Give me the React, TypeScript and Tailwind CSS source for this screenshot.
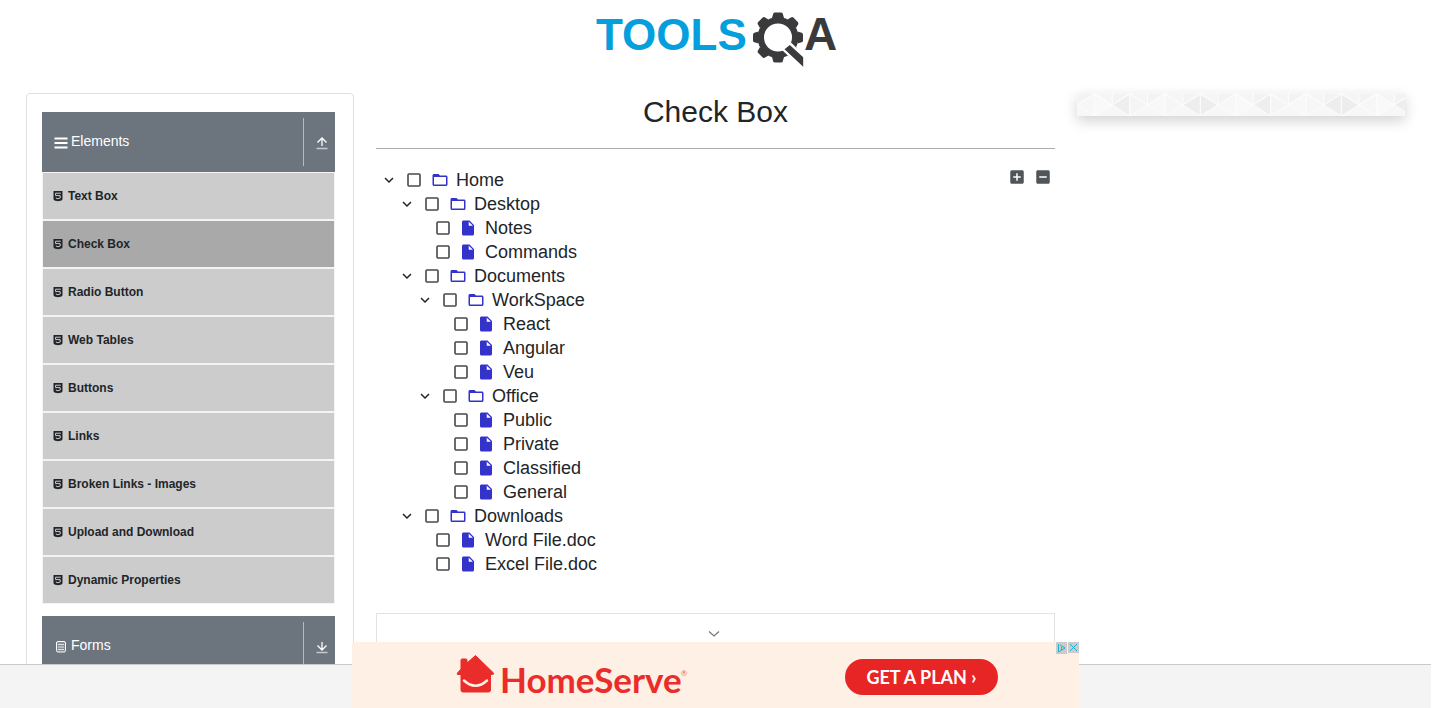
import { useState } from "react";
import type { ReactNode } from "react";
import { MdAddBox, MdExpandMore, MdFolderOpen, MdIndeterminateCheckBox, MdInsertDriveFile } from "react-icons/md";

type TreeNode = { label: string; children?: TreeNode[] };

const tree: TreeNode = {
  label: "Home",
  children: [
    { label: "Desktop", children: [{ label: "Notes" }, { label: "Commands" }] },
    {
      label: "Documents",
      children: [
        { label: "WorkSpace", children: [{ label: "React" }, { label: "Angular" }, { label: "Veu" }] },
        {
          label: "Office",
          children: [{ label: "Public" }, { label: "Private" }, { label: "Classified" }, { label: "General" }],
        },
      ],
    },
    { label: "Downloads", children: [{ label: "Word File.doc" }, { label: "Excel File.doc" }] },
  ],
};

const menu = [
  "Text Box",
  "Check Box",
  "Radio Button",
  "Web Tables",
  "Buttons",
  "Links",
  "Broken Links - Images",
  "Upload and Download",
  "Dynamic Properties",
];

const gearAngles = [0, 45, 90, 135, 180, 225, 270, 315];

function Logo() {
  return (
    <svg width="246" height="60" viewBox="0 0 246 60" role="img" aria-label="TOOLSQA">
      <text x="3" y="42" fontSize="44" fontWeight="700" fill="#049fdc" className="font-['Liberation_Sans',sans-serif]">
        TOOLS
      </text>
      <g fill="#3a3a3c">
        {gearAngles.map((a) => (
          <path
            key={a}
            d="M179 10 L180.2 5.8 Q180.6 4.5 182 4.500 H188 Q189.400 4.500 189.800 5.800 L191 10Z"
            transform={`rotate(${a} 185 29.500)`}
          />
        ))}
        <circle cx="185" cy="29.500" r="20.500" />
      </g>
      <circle cx="185" cy="29.500" r="14" fill="#fff" />
      <path d="M189 42 L198 34.500 L214 50 V60 H208Z" fill="#fff" />
      <path d="M191.500 41.300 L196.800 37 L210.200 49.300 V58.700Z" fill="#3a3a3c" />
      <text x="211" y="42" fontSize="46" fontWeight="700" fill="#3a3a3c" className="font-['Liberation_Sans',sans-serif]">
        A
      </text>
    </svg>
  );
}

function Html5Icon() {
  return (
    <svg width="10" height="12" viewBox="0 0 10 12" aria-hidden="true">
      <path d="M0.500 1H9.500V9Q9.500 10 8.500 10.400L5 11.200L1.500 10.400Q0.500 10 0.500 9Z" fill="#212529" />
      <path d="M7.800 3.200H2.600V5.600H7.200V8L5 8.800L2.800 8" fill="none" stroke="#ccc" strokeWidth="1" />
    </svg>
  );
}

function GroupHeader({ title, icon, open }: { title: string; icon: ReactNode; open: boolean }) {
  return (
    <button type="button" aria-expanded={open} className="flex h-[60px] w-full items-center bg-[#6c757d] text-left text-white">
      <span className="flex flex-1 items-center gap-[3px] pb-[2px] pl-3 text-[14px]">
        <span className="flex w-[14px] justify-center pt-[3px]">{icon}</span>
        {title}
      </span>
      <span className="flex h-12 w-8 items-center justify-center border-l border-[#b5babe] pt-[2px] pl-1">
        <svg width="12" height="14" viewBox="0 0 12 14" fill="none" aria-hidden="true">
          <path d={open ? "M6 10V2M1.500 6.500L6 2L10.500 6.500" : "M6 2V10M1.500 5.500L6 10L10.500 5.500"} stroke="#fff" strokeWidth="1.300" />
          <path d="M0.500 12.500H11.500" stroke="#c4c8cb" strokeWidth="1.500" />
        </svg>
      </span>
    </button>
  );
}

function Sidebar() {
  return (
    <nav className="rounded border border-[#dfdfdf] pt-[18px] pr-[18px] pb-4 pl-[15px]">
      <GroupHeader
        open
        title="Elements"
        icon={
          <svg width="14" height="12" viewBox="0 0 14 12" aria-hidden="true">
            <path d="M0.500 1.500H13.500M0.500 6H13.500M0.500 10.500H13.500" stroke="#fff" strokeWidth="2" />
          </svg>
        }
      />
      <ul>
        {menu.map((name) => (
          <li key={name}>
            <a
              href="#"
              className={`flex h-12 items-center gap-[5px] border border-[#f4f4f4] pl-[10px] text-[12px] font-bold text-[#212529] ${
                name === "Check Box" ? "bg-[#a9a9a9]" : "bg-[#ccc]"
              }`}
            >
              <Html5Icon />
              {name}
            </a>
          </li>
        ))}
      </ul>
      <div className="mt-3">
        <GroupHeader
          open={false}
          title="Forms"
          icon={
            <svg width="10" height="12" viewBox="0 0 10 12" fill="none" aria-hidden="true">
              <rect x="0.500" y="0.500" width="9" height="10.500" rx="1.500" fill="#878e95" stroke="#fff" />
              <path d="M2 3.500H8M2 6H8M2 8.500H8" stroke="#dfe1e3" />
            </svg>
          }
        />
      </div>
    </nav>
  );
}

function Branch({ node, expanded }: { node: TreeNode; expanded: boolean }) {
  const [open, setOpen] = useState(true);
  const folder = node.children !== undefined;
  return (
    <li>
      <div className={`flex h-6 items-center ${folder ? "pl-1" : "pl-[22px]"}`}>
        {folder && (
          <button type="button" aria-label="Toggle" onClick={() => setOpen(!open)} className="mr-[7px]">
            <MdExpandMore size={18} color="#212529" />
          </button>
        )}
        <label className={`flex items-center ${folder ? "gap-2" : "gap-[7px]"}`}>
          <input type="checkbox" className="peer sr-only" />
          <svg
            width="18"
            height="18"
            viewBox="0 0 18 18"
            fill="none"
            stroke="#45494d"
            strokeWidth="1.600"
            className="text-transparent peer-checked:text-[#45494d]"
            aria-hidden="true"
          >
            <rect x="3" y="3" width="12" height="12" rx="1" />
            <path d="M5 9L8 12L13 6" stroke="currentColor" />
          </svg>
          <span className={`flex items-center ${folder ? "gap-[7px]" : "gap-2"}`}>
            {folder ? <MdFolderOpen size={18} color="#3333cc" /> : <MdInsertDriveFile size={18} color="#3333cc" />}
            <span className="text-[18px] leading-6">{node.label}</span>
          </span>
        </label>
      </div>
      {folder && open && expanded && (
        <ul className="pl-[18px]">
          {node.children?.map((child) => (
            <Branch key={child.label} node={child} expanded={expanded} />
          ))}
        </ul>
      )}
    </li>
  );
}

function CheckBoxPage() {
  const [expanded, setExpanded] = useState(true);
  return (
    <main>
      <h1 className="pb-[18px] text-center text-[30px] leading-[37px]">Check Box</h1>
      <hr className="border-[#adadad]" />
      <div className="flex items-start pt-[19px]">
        <ul className="flex-1">
          <Branch node={tree} expanded={expanded} />
        </ul>
        <div className="flex gap-2 pr-[3px] text-[#50555a]">
          <button type="button" aria-label="Expand all" onClick={() => setExpanded(true)}>
            <MdAddBox size={18} />
          </button>
          <button type="button" aria-label="Collapse all" onClick={() => setExpanded(false)}>
            <MdIndeterminateCheckBox size={18} />
          </button>
        </div>
      </div>
      <div className="mt-[37px] flex h-32 justify-center border border-[#e3e3e3] pt-4 pr-[3px]">
        <svg width="12" height="8" viewBox="0 0 12 8" fill="none" aria-hidden="true">
          <path d="M1 1.500L6 6L11 1.500" stroke="#777" strokeWidth="1.300" />
        </svg>
      </div>
    </main>
  );
}

const tiles: [string, string][] = [
  ["#f7f7f7", "#f9f9f9"],
  ["#eeeeee", "#f5f5f5"],
  ["#f8f8f8", "#f6f6f6"],
  ["#ededed", "#ededed"],
];

function PatternStrip() {
  return (
    <svg className="block h-[23px] w-full bg-[#f7f7f7] shadow-[0_5px_14px_rgba(0,0,0,0.18)]" aria-hidden="true">
      <defs>
        <pattern id="diamonds" width="141" height="23" patternUnits="userSpaceOnUse">
          {tiles.map(([left, right], i) => (
            <g key={i} transform={`translate(${i * 35.25} 0)`} stroke="#fcfcfc" strokeWidth="1">
              <path d="M0 0H17.600L0 12Z" fill="#f3f3f3" />
              <path d="M35.200 0H17.600L35.200 12Z" fill="#f5f5f5" />
              <path d="M0 12L17.600 1V23Z" fill={left} />
              <path d="M35.200 12L17.600 1V23Z" fill={right} />
            </g>
          ))}
        </pattern>
      </defs>
      <rect width="100%" height="23" fill="url(#diamonds)" />
    </svg>
  );
}

function AdBanner() {
  return (
    <div className="relative flex h-[66px] w-[727px] items-start bg-[#fef0e4] pl-[104px] font-[Lato,sans-serif]">
      <svg className="mt-3" width="39" height="40" viewBox="0 0 39 40" aria-hidden="true">
        <path
          d="M19.500 1.500L37.500 19Q38 20.500 36.500 20.500H34.500V36Q34.500 38 32.500 38H7Q5 38 5 36V20.500H2Q0.500 20.500 1.500 19L5 15V6Q5 5 6 5H10Q11 5 11 6V9Z"
          fill="#ea2d2b"
          stroke="#ea2d2b"
          strokeLinejoin="round"
        />
        <path d="M8 26.500Q19.500 37 31 26.500" fill="none" stroke="#fef0e4" strokeWidth="2.500" strokeLinecap="round" />
      </svg>
      <span className="mt-4 ml-[5px] text-[35px] leading-[42px] font-bold text-[#ea2d2b]">HomeServe</span>
      <span className="mt-[26px] -ml-px text-[8px] leading-[10px] text-[#ea6a62]">®</span>
      <a
        href="#"
        className="mt-[17px] mr-[81px] ml-auto flex h-9 w-[153px] items-center justify-center rounded-full bg-[#e82525] text-[18px] font-bold text-white"
      >
        GET A PLAN ›
      </a>
      <div className="absolute top-0 right-0 flex items-start gap-px">
        <button type="button" aria-label="Ad choices" className="flex h-3 w-[11px] items-center justify-center bg-[#cbcbcb]">
          <svg width="9" height="10" viewBox="0 0 9 10" fill="none" stroke="#1fb0cc" aria-hidden="true">
            <path d="M1.500 1V9L8 5L3 2M4.500 4V7" />
          </svg>
        </button>
        <button type="button" aria-label="Close ad" className="flex h-[11px] w-[11px] items-center justify-center bg-[#cbcbcb]">
          <svg width="9" height="9" viewBox="0 0 9 9" stroke="#1fb0cc" aria-hidden="true">
            <path d="M1 1L8 8M8 1L1 8" />
          </svg>
        </button>
      </div>
    </div>
  );
}

export default function App() {
  return (
    <div className="relative h-screen overflow-hidden bg-white pr-[9px] font-['Liberation_Sans',Arial,sans-serif] text-[#212529]">
      <header className="flex justify-center pt-2 pb-[25px]">
        <Logo />
      </header>
      <div className="grid grid-cols-[minmax(0,328fr)_minmax(0,679fr)_minmax(0,328fr)] items-start gap-[22px] px-[26px]">
        <Sidebar />
        <CheckBoxPage />
        <PatternStrip />
      </div>
      <footer className="absolute right-[9px] bottom-0 left-0 h-11 border-t border-[#c9c9c9] bg-[#f4f4f4]" />
      <aside className="absolute right-[9px] bottom-0 left-0 flex justify-center">
        <AdBanner />
      </aside>
    </div>
  );
}
